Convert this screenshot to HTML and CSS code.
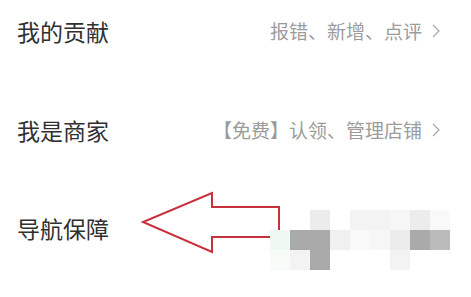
FILE: index.html
```html
<!DOCTYPE html>
<html lang="zh-CN">
<head>
<meta charset="utf-8">
<link rel="stylesheet" href="styles.css">
</head>
<body>
<div class="page">
  <ul class="menu">
    <li class="row">
      <span class="label">我的贡献</span>
      <span class="extra">报错、新增、点评<svg class="chev" viewBox="0 0 8 14"><polyline points="1,1 7,7 1,13"/></svg></span>
    </li>
    <li class="row">
      <span class="label">我是商家</span>
      <span class="extra">【免费】认领、管理店铺<svg class="chev" viewBox="0 0 8 14"><polyline points="1,1 7,7 1,13"/></svg></span>
    </li>
    <li class="row">
      <span class="label">导航保障</span>
    </li>
  </ul>
  <svg class="arrow" viewBox="0 0 471 297" width="471" height="297">
    <path d="M279,231 L279,207 L212,207 L212,193 L143,222 L212,252 L212,237 L272,237"/>
  </svg>
  <div class="mosaic">
    <i></i><i></i><i class="l2"></i><i></i><i class="l3"></i><i class="l3"></i><i class="l4"></i><i class="l2"></i><i class="l5"></i>
    <i class="g"></i><i class="d1"></i><i class="d1"></i><i class="l1"></i><i class="l5"></i><i class="l4"></i><i class="l2"></i><i class="d1"></i><i class="d2"></i>
    <i class="g2"></i><i class="l3"></i><i class="d1"></i><i></i><i></i><i></i><i class="l3"></i><i></i><i></i>
  </div>
</div>
</body>
</html>
```

FILE: styles.css
```css
* { box-sizing: border-box; }
html, body { margin: 0; padding: 0; background: #fff; }
body {
  width: 471px;
  height: 297px;
  overflow: hidden;
  font-family: "Noto Sans CJK SC", "Noto Sans", sans-serif;
}
.page { position: relative; width: 471px; height: 297px; }
.menu {
  list-style: none;
  margin: 0;
  padding: 20px 31px 0 17px;
  display: flex;
  flex-direction: column;
  gap: 76.5px;
}
.row {
  height: 22px;
  display: flex;
  align-items: center;
  justify-content: space-between;
}
.label {
  font-size: 23px;
  line-height: 22px;
  color: #303030;
}
.extra {
  display: flex;
  align-items: center;
  font-size: 19px;
  line-height: 22px;
  color: #9c9c9c;
}
.chev {
  width: 8px;
  height: 14px;
  margin-left: 10px;
  fill: none;
  stroke: #a8a8a8;
  stroke-width: 1.2;
}
.arrow {
  position: absolute;
  left: 0;
  top: 0;
  fill: none;
  stroke: #c8303c;
  stroke-width: 2;
  stroke-linejoin: miter;
}
.mosaic {
  position: absolute;
  left: 270px;
  top: 210px;
  display: grid;
  grid-template-columns: repeat(9, 20px);
  grid-auto-rows: 20px;
}
.mosaic i { display: block; background: transparent; }
.mosaic .l1 { background: #f0f0f0; }
.mosaic .l2 { background: #ececec; }
.mosaic .l3 { background: #f3f3f3; }
.mosaic .l4 { background: #f6f6f6; }
.mosaic .l5 { background: #f9f9f9; }
.mosaic .d1 { background: #aaaaaa; }
.mosaic .d2 { background: #bbbbbb; }
.mosaic .g { background: #eefaf1; }
.mosaic .g2 { background: #f7fcf8; }
```
